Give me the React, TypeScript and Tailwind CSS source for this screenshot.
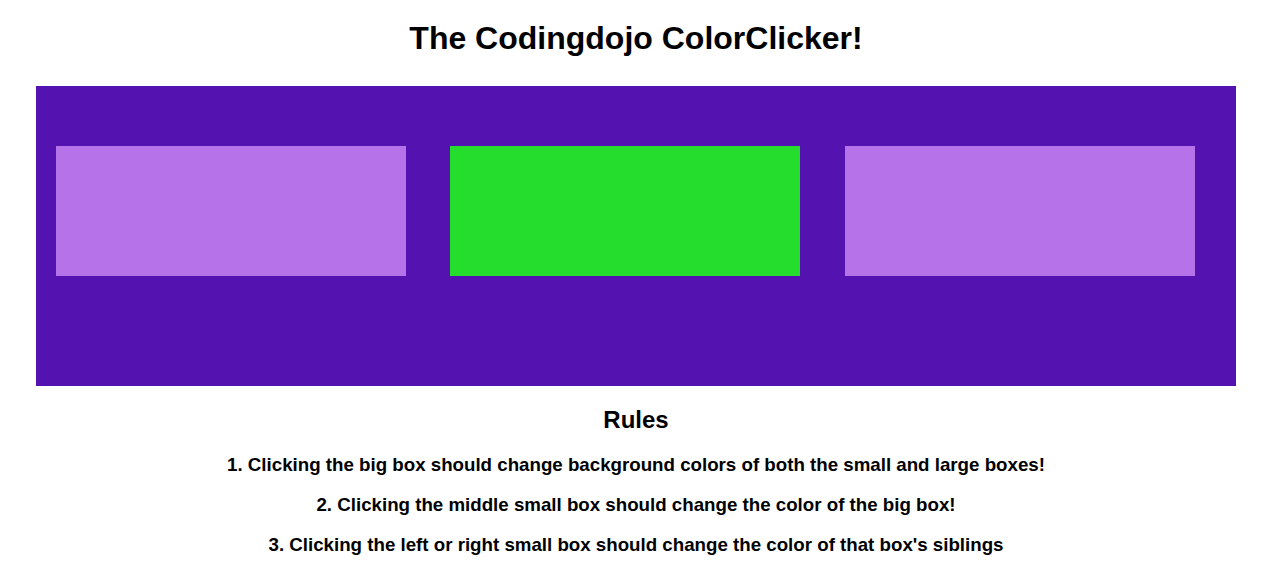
import React from "react";

export default function App() {
  return (
    <div className="w-[1269px] h-[580px] bg-white text-black overflow-hidden" style={{ fontFamily: '"Liberation Sans", Arial, sans-serif' }}>
      <h1 className="text-[32px] font-bold leading-[37px] text-center pt-[20px] pl-[3px]">The Codingdojo ColorClicker!</h1>
      <div className="ml-[36px] mt-[29px] w-[1200px] h-[300px] bg-[#5413b0] pt-[60px] flex items-start">
        <div className="ml-[20px] w-[350px] h-[130px] bg-[#b672e8]" />
        <div className="ml-[44px] w-[350px] h-[130px] bg-[#24dd2c]" />
        <div className="ml-[45px] w-[350px] h-[130px] bg-[#b672e8]" />
      </div>
      <h2 className="text-[24px] font-bold leading-[28px] text-center mt-[20px] pl-[3px]">Rules</h2>
      <div className="flex flex-col items-center text-[18.72px] font-bold leading-[22px] pl-[3px]">
        <p className="mt-[20px]">1. Clicking the big box should change background colors of both the small and large boxes!</p>
        <p className="mt-[18px]">2. Clicking the middle small box should change the color of the big box!</p>
        <p className="mt-[18px]">3. Clicking the left or right small box should change the color of that box's siblings</p>
      </div>
    </div>
  );
}
